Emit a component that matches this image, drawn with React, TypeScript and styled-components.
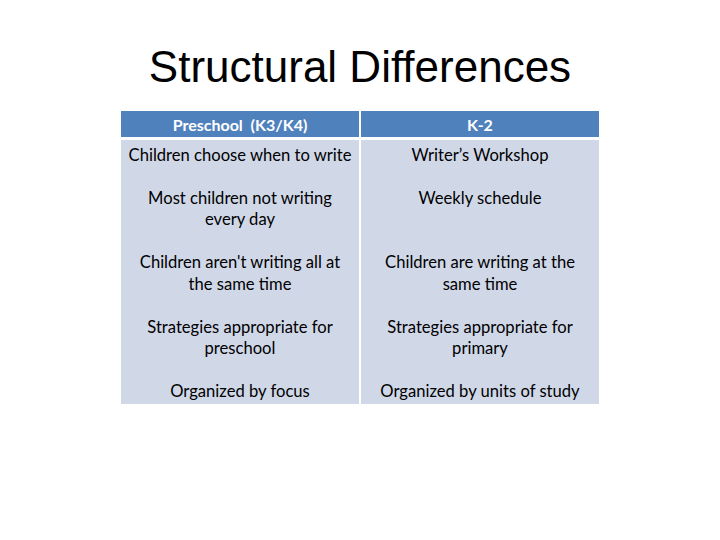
import styled, { createGlobalStyle } from "styled-components";

const GlobalStyle = createGlobalStyle`
  html, body {
    margin: 0;
    padding: 0;
    background: #ffffff;
  }
  body {
    width: 720px;
    height: 540px;
    overflow: hidden;
  }
`;

const Slide = styled.div`
  width: 720px;
  height: 540px;
  display: flex;
  flex-direction: column;
  align-items: center;
  padding-top: 45px;
  box-sizing: border-box;
`;

const Title = styled.h1`
  margin: 0;
  font-family: "Liberation Sans", Arial, sans-serif;
  font-weight: 400;
  font-size: 44px;
  line-height: 44px;
  color: #000000;
`;

const Table = styled.div`
  margin-top: 22px;
  display: grid;
  grid-template-columns: 238px 238px;
  column-gap: 2px;
  font-family: Lato, "Open Sans", sans-serif;
`;

const HeadCell = styled.div`
  height: 26px;
  margin-bottom: 3px;
  background: #4f81bd;
  color: #ffffff;
  font-weight: 700;
  font-size: 16px;
  display: flex;
  align-items: center;
  justify-content: center;
  white-space: pre;
`;

const Cell = styled.div<{ $first?: boolean; $last?: boolean }>`
  background: #d0d8e8;
  color: #000000;
  font-size: 16.6px;
  line-height: 21.5px;
  text-align: center;
  white-space: nowrap;
  padding: ${(p) => (p.$first ? "4.5px" : "0")} 4px
    ${(p) => (p.$last ? "1px" : "21.5px")};
`;

const rows: [string[], string[]][] = [
  [["Children choose when to write"], ["Writer’s Workshop"]],
  [["Most children not writing", "every day"], ["Weekly schedule"]],
  [["Children aren't writing all at", "the same time"], ["Children are writing at the", "same time"]],
  [["Strategies appropriate for", "preschool"], ["Strategies appropriate for", "primary"]],
  [["Organized by focus"], ["Organized by units of study"]],
];

function Lines({ lines }: { lines: string[] }) {
  return (
    <>
      {lines.map((l, i) => (
        <div key={i}>{l}</div>
      ))}
    </>
  );
}

function App() {
  return (
    <>
      <GlobalStyle />
      <Slide>
        <Title>Structural Differences</Title>
        <Table>
          <HeadCell>Preschool  (K3/K4)</HeadCell>
          <HeadCell>K-2</HeadCell>
          {rows.map(([left, right], i) => (
            <>
              <Cell key={`l${i}`} $first={i === 0} $last={i === rows.length - 1}>
                <Lines lines={left} />
              </Cell>
              <Cell key={`r${i}`} $first={i === 0} $last={i === rows.length - 1}>
                <Lines lines={right} />
              </Cell>
            </>
          ))}
        </Table>
      </Slide>
    </>
  );
}

export default App;
